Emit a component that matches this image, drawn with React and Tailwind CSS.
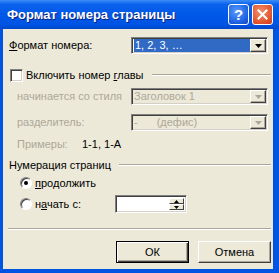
import React from "react";

const font = { fontFamily: '"Liberation Sans", Arial, sans-serif' };

function Arrow({ gray }) {
  return (
    <svg width="7" height="4" viewBox="0 0 7 4">
      <path d="M0 0H7L3.5 4Z" fill={gray ? "#aca899" : "#000"} />
    </svg>
  );
}

function DropBtn({ gray }) {
  return (
    <div className="w-[16px] h-full shrink-0 bg-[#ece9d8] border border-t-white border-l-white border-r-[#404040] border-b-[#404040] shadow-[inset_-1px_-1px_0_#aca899] flex items-center justify-center">
      <Arrow gray={gray} />
    </div>
  );
}

function Combo({ children, disabled, className }) {
  return (
    <div
      className={
        "h-[17px] shrink-0 border border-t-[#808080] border-l-[#808080] border-r-white border-b-white shadow-[inset_1px_1px_0_#404040,inset_-1px_-1px_0_#d4d0c8] flex items-stretch p-[1px] " +
        (disabled ? "bg-[#ece9d8] " : "bg-white ") +
        (className || "")
      }
    >
      <div className="flex-1 flex items-center pl-[1px] whitespace-nowrap overflow-hidden">{children}</div>
      <DropBtn gray={disabled} />
    </div>
  );
}

function Etched({ className }) {
  return <div className={"h-[2px] border-t border-t-[#aca899] border-b border-b-white " + (className || "")} />;
}

function Btn({ children, def }) {
  return (
    <div
      className={
        "w-[73px] h-[22px] flex items-center justify-center bg-[#ece9d8] text-[11px] text-black " +
        (def
          ? "border border-black shadow-[inset_1px_1px_0_white,inset_-1px_-1px_0_#404040,inset_-2px_-2px_0_#aca899]"
          : "border border-t-white border-l-white border-r-[#404040] border-b-[#404040] shadow-[inset_-1px_-1px_0_#aca899]")
      }
    >
      {children}
    </div>
  );
}

export default function App() {
  return (
    <div className="w-[279px] h-[273px] bg-[#0054e3] flex flex-col overflow-hidden whitespace-nowrap" style={font}>
      <div className="h-[29px] shrink-0 flex items-center pl-[7px] pr-[6px] bg-[linear-gradient(180deg,#3d8cf6_0%,#0a62ec_15%,#0058e8_50%,#0054e3_85%,#0047c9_100%)]">
        <span className="text-white font-bold text-[13px] [text-shadow:1px_1px_0_#0a1f7a] flex-1">
          Формат номера страницы
        </span>
        <div className="w-[21px] h-[21px] rounded-[3px] border border-white bg-[radial-gradient(circle_at_40%_35%,#5a9cff,#1a5fe0_70%,#1246c4)] flex items-center justify-center text-white font-bold text-[15px] leading-none">
          ?
        </div>
        <div className="w-[21px] h-[21px] ml-[3px] rounded-[3px] border border-white bg-[radial-gradient(circle_at_40%_35%,#f4906a,#e0502a_70%,#c83a18)] flex items-center justify-center">
          <svg width="11" height="11" viewBox="0 0 11 11">
            <path d="M1.5 1.5L9.5 9.5M9.5 1.5L1.5 9.5" stroke="white" strokeWidth="2" strokeLinecap="square" />
          </svg>
        </div>
      </div>

      <div className="flex-1 ml-[3px] mr-[6px] mb-[4px] bg-[#ece9d8] flex flex-col text-[11px] text-black">
        {/* row 1 */}
        <div className="mt-[8px] h-[17px] flex items-center">
          <span className="pl-[6px] w-[128px] shrink-0">
            <u>Ф</u>ормат номера:
          </span>
          <Combo className="w-[137px]">
            <span className="bg-[#316ac5] text-white px-[1px] w-full h-[13px] leading-[13px]">1, 2, 3, …</span>
          </Combo>
        </div>

        {/* row 2 checkbox */}
        <div className="mt-[13px] h-[16px] flex items-center pl-[7px] pr-[2px]">
          <div className="w-[13px] h-[13px] shrink-0 bg-white border border-t-[#808080] border-l-[#808080] border-r-white border-b-white shadow-[inset_1px_1px_0_#404040,inset_-1px_-1px_0_#d4d0c8]" />
          <span className="ml-[3px] shrink-0">
            Включить номер <u>г</u>лавы
          </span>
          <Etched className="flex-1 ml-[8px]" />
        </div>

        {/* row 3 */}
        <div className="mt-[5px] h-[17px] flex items-center">
          <span className="pl-[14px] w-[128px] shrink-0 text-[#aca899]">начинается со стиля</span>
          <Combo disabled className="w-[137px]">
            <span className="text-[#aca899]">Заголовок 1</span>
          </Combo>
        </div>

        {/* row 4 */}
        <div className="mt-[9px] h-[17px] flex items-center">
          <span className="pl-[14px] w-[128px] shrink-0 text-[#aca899]">разделитель:</span>
          <Combo disabled className="w-[137px]">
            <span className="text-[#aca899]">-</span>
            <span className="text-[#aca899] ml-[19px]">(дефис)</span>
          </Combo>
        </div>

        {/* row 5 */}
        <div className="mt-[5px] h-[16px] flex items-center">
          <span className="pl-[14px] w-[79px] shrink-0 text-[#aca899]">Примеры:</span>
          <span>1-1, 1-А</span>
        </div>

        {/* row 6 */}
        <div className="mt-[5px] h-[16px] flex items-center pl-[6px] pr-[2px]">
          <span className="shrink-0">Нумерация страниц</span>
          <Etched className="flex-1 ml-[8px]" />
        </div>

        {/* row 7 */}
        <div className="mt-[2px] h-[16px] flex items-center pl-[17px]">
          <div className="w-[12px] h-[12px] shrink-0 rounded-full bg-white border border-t-[#808080] border-l-[#808080] border-r-white border-b-white shadow-[inset_1px_1px_0_#404040] flex items-center justify-center">
            <div className="w-[4px] h-[4px] rounded-full bg-black" />
          </div>
          <span className="ml-[3px]">
            <u>п</u>родолжить
          </span>
        </div>

        {/* row 8 */}
        <div className="mt-[4px] h-[18px] flex items-center pl-[17px]">
          <div className="w-[12px] h-[12px] shrink-0 rounded-full bg-white border border-t-[#808080] border-l-[#808080] border-r-white border-b-white shadow-[inset_1px_1px_0_#404040]" />
          <span className="ml-[3px] w-[80px] shrink-0">
            н<u>а</u>чать с:
          </span>
          <div className="w-[72px] h-[18px] shrink-0 bg-white border border-t-[#808080] border-l-[#808080] border-r-white border-b-white shadow-[inset_1px_1px_0_#404040,inset_-1px_-1px_0_#d4d0c8] flex justify-end p-[2px]">
            <div className="w-[15px] flex flex-col">
              <div className="flex-1 bg-[#ece9d8] border border-t-white border-l-white border-r-[#404040] border-b-[#404040] flex items-center justify-center">
                <svg width="5" height="3" viewBox="0 0 5 3"><path d="M0 3H5L2.5 0Z" fill="#000" /></svg>
              </div>
              <div className="flex-1 bg-[#ece9d8] border border-t-white border-l-white border-r-[#404040] border-b-[#404040] flex items-center justify-center">
                <svg width="5" height="3" viewBox="0 0 5 3"><path d="M0 0H5L2.5 3Z" fill="#000" /></svg>
              </div>
            </div>
          </div>
        </div>

        {/* separator */}
        <Etched className="mt-[15px] ml-[5px] mr-[2px]" />

        {/* buttons */}
        <div className="mt-[11px] flex justify-end gap-[9px] pr-[2px]">
          <Btn def>ОК</Btn>
          <Btn>Отмена</Btn>
        </div>
      </div>
    </div>
  );
}
